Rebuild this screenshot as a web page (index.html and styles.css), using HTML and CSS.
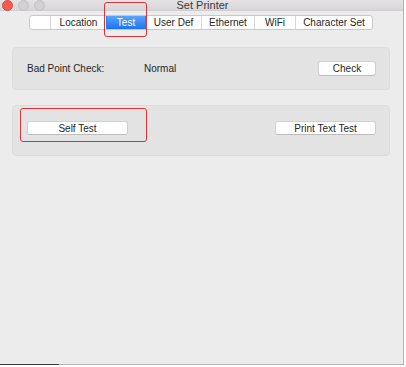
FILE: index.html
```html
<!DOCTYPE html>
<html lang="en">
<head>
    <meta charset="UTF-8">
    <title>Set Printer</title>
    <link rel="stylesheet" href="styles.css">
</head>
<body>
    <div class="window">
        <div class="titlebar">
            <div class="lights">
                <span class="light close"></span>
                <span class="light"></span>
                <span class="light"></span>
            </div>
            <div class="title">Set Printer</div>
            <div class="lights-spacer"></div>
        </div>

        <div class="tabs">
            <div class="tab tab-blank"></div>
            <div class="tab tab-location">Location</div>
            <div class="tab tab-test selected">Test</div>
            <div class="tab tab-userdef">User Def</div>
            <div class="tab tab-ethernet">Ethernet</div>
            <div class="tab tab-wifi">WiFi</div>
            <div class="tab tab-charset">Character Set</div>
        </div>

        <div class="panel panel-check">
            <span class="label">Bad Point Check:</span>
            <span class="status">Normal</span>
            <button class="btn btn-check">Check</button>
        </div>

        <div class="panel panel-test">
            <button class="btn btn-wide">Self Test</button>
            <button class="btn btn-wide">Print Text Test</button>
        </div>

        <div class="mark mark-tab"></div>
        <div class="mark mark-self"></div>
    </div>
</body>
</html>
```

FILE: styles.css
```css
body {
    margin: 0;
    background: #fff;
    font-family: "Liberation Sans", Arial, sans-serif;
    color: #262626;
}
.window {
    position: relative;
    width: 403px;
    height: 364px;
    background: #ececec;
    border-right: 1px solid #8e8e8e;
    border-bottom: 1px solid #b4b4b4;
    border-image: linear-gradient(to right, #3c3c3c 0 60px, #b4b4b4 60px) 1;
    border-top: 0;
    border-left: 0;
    overflow: hidden;
}
.titlebar {
    display: flex;
    height: 11px;
    background: linear-gradient(#e4e2e4, #d8d6d8);
    border-bottom: 1px solid #cfcdcf;
    box-sizing: border-box;
}
.lights, .lights-spacer {
    width: 50px;
}
.lights {
    display: flex;
    gap: 5px;
    padding-left: 2px;
}
.light {
    width: 9px;
    height: 9px;
    border-radius: 50%;
    background: #d3d1d3;
    border: 0.5px solid #c2c0c2;
}
.light.close {
    background: #f35a52;
    border-color: #e04840;
}
.title {
    flex: 1;
    text-align: center;
    font-size: 11px;
    line-height: 10px;
    color: #3a3a3a;
}
.tabs {
    display: flex;
    margin: 4px 0 0 29px;
    height: 15px;
    width: max-content;
    background: #fff;
    border: 1px solid #c9c9c9;
    border-radius: 3px;
    box-sizing: border-box;
    overflow: hidden;
}
.tab {
    font-size: 10px;
    line-height: 13px;
    text-align: center;
    border-left: 1px solid #d6d6d6;
    box-sizing: border-box;
}
.tab-blank { width: 20px; border-left: 0; }
.tab-location { width: 56px; }
.tab-test { width: 39px; }
.tab-userdef { width: 56px; }
.tab-ethernet { width: 53px; }
.tab-wifi { width: 41px; }
.tab-charset { width: 77px; }
.tab.selected {
    background: linear-gradient(#5ba4fb, #1b74f4);
    color: #fff;
    border-left-color: #2a7ff3;
}
.tab.selected + .tab {
    border-left-color: #2a7ff3;
}
.panel {
    display: flex;
    align-items: center;
    margin: 0 13px 0 12px;
    padding: 0 13px 0 14px;
    background: #e3e3e3;
    border: 1px solid #dddddd;
    border-radius: 4px;
    box-sizing: border-box;
}
.panel-check {
    margin-top: 17px;
    height: 43px;
}
.panel-test {
    margin-top: 15px;
    height: 51px;
    justify-content: space-between;
    padding-bottom: 5px;
}
.label {
    font-size: 10px;
    width: 117px;
}
.status {
    font-size: 10px;
    flex: 1;
}
.btn {
    font-family: "Liberation Sans", Arial, sans-serif;
    font-size: 10px;
    color: #262626;
    background: #fff;
    border: 1px solid #d0d0d0;
    border-bottom-color: #bdbdbd;
    border-radius: 3px;
    padding: 0;
    box-sizing: border-box;
}
.btn-check {
    width: 58px;
    height: 15px;
}
.btn-wide {
    width: 101px;
    height: 14px;
}
.mark {
    position: absolute;
    border: 1px solid #d8343a;
    border-radius: 3px;
    box-sizing: border-box;
}
.mark-tab {
    left: 104px;
    top: 2px;
    width: 43px;
    height: 35px;
}
.mark-self {
    left: 20px;
    top: 108px;
    width: 127px;
    height: 34px;
}
```
